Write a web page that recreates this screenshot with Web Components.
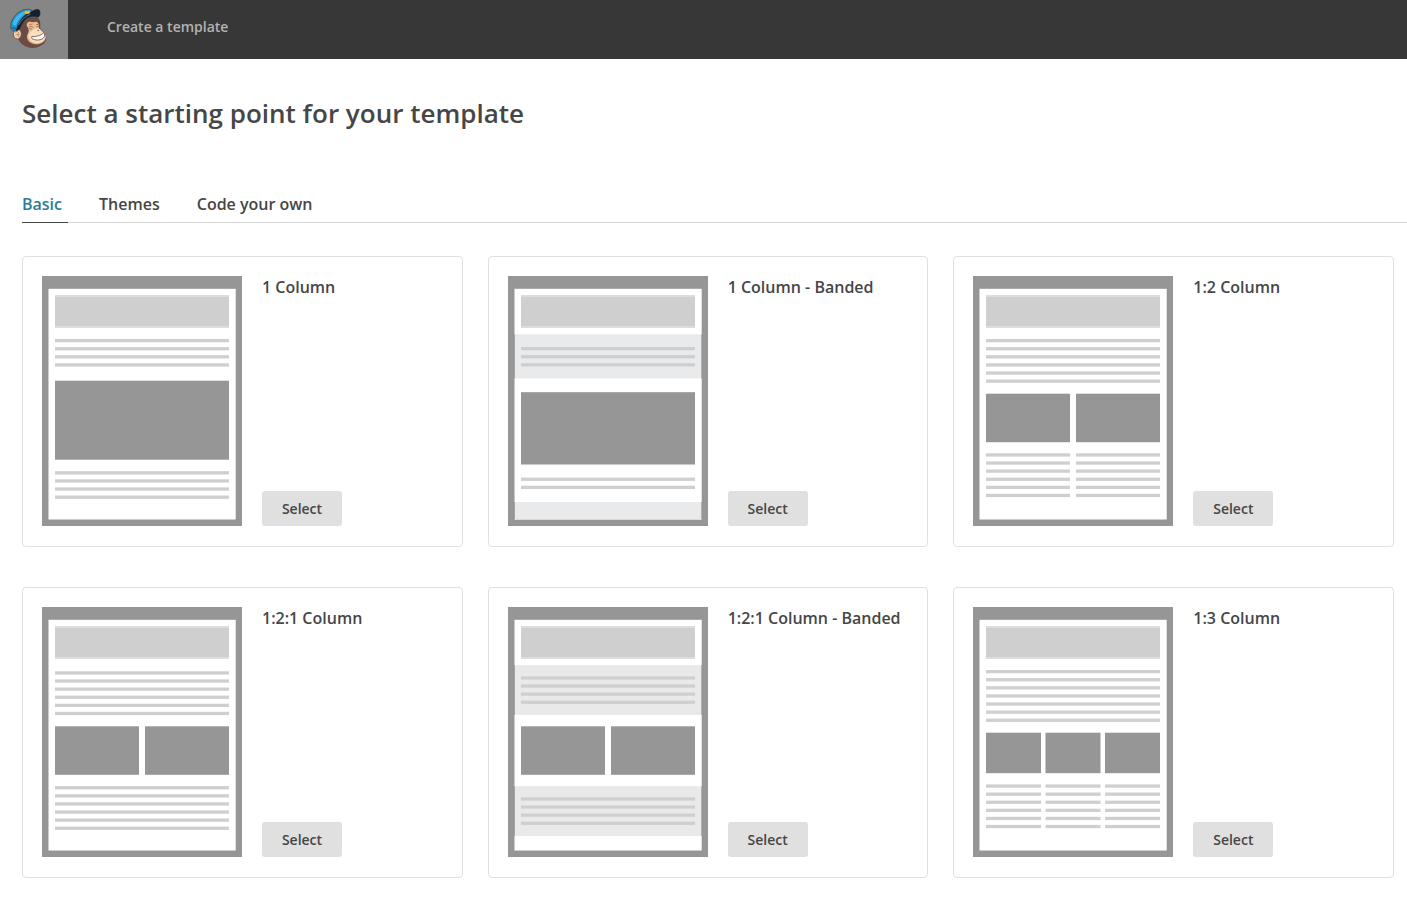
<!DOCTYPE html>
<html lang="en">
<head>
<meta charset="utf-8">
<title>Create a template</title>
<style>
  body { margin: 0; background: #fff; color: #464646; font-family: "Open Sans", "Noto Sans", sans-serif; font-weight: 600; }
</style>
</head>
<body>
<template-page></template-page>

<template id="brand-logo">
  <style>
    :host { display: block; }
    a { display: block; width: 68px; height: 59px; background: #868686; }
    svg { display: block; }
  </style>
  <a href="#" aria-label="Home">
    <svg width="68" height="59" viewBox="-2 0 204 177" aria-hidden="true">
      <path d="M51 112C48 88 58 62 80 50c16-7 32-3 37 11 5 14-2 20 5 29 6 9 15 15 15 24 0 18-21 29-41 30-24 0-40-14-45-32z" fill="#6b4b45"/>
      <path d="M82 67c8-4 14 1 19-1 6-2 10 0 12 5 3 7 0 12 4 17l11 10c6 5 8 10 7 17-3 12-17 19-29 18-16-1-26-10-27-21-1-8 5-13 5-19 1-9-7-13-6-20 1-3 2-5 4-6z" fill="#e8bd93"/>
      <path d="M84 106c2-10 10-14 17-19 9-5 18-1 23 7l7 8c5 8 3 16-3 20-8 7-22 9-32 4-8-4-13-12-12-20z" fill="#f9dfbd"/>
      <path d="M93 110c11 0 27-2 36-12 5 5 3 14-3 18-9 6-23 5-30 1-4-2-5-5-3-7z" fill="#fff" stroke="#694a42" stroke-width="2.5"/>
      <path d="M101 111v8M109 110v9M117 107v11" stroke="#d8d4d0" stroke-width="1"/>
      <path d="M84 82c5-4 9-4 14 1M85 86l9 1M106 81c4-3 7-2 9 1M86 74l9-2M106 73l7 1" fill="none" stroke="#8b5c43" stroke-width="2"/>
      <path d="M110 91l5 1M122 91l2 1" stroke="#6b4b45" stroke-width="2.5"/>
      <ellipse cx="50" cy="102" rx="12" ry="15" fill="#f5d3ad" stroke="#6b4b45" stroke-width="2.5"/>
      <path d="M44 97c7-8 15 5 8 14M45 105l7-2" fill="none" stroke="#a77255" stroke-width="2.5"/>
      <path d="M31 88c-6-24 16-56 45-60 13-2 22 3 19 10C76 44 57 64 47 92c-6 3-12 1-16-4z" fill="#159bd6" stroke="#594643" stroke-width="2.5"/>
      <path d="M36 71c6-20 21-35 41-39 7-1 11 0 13 2-21 6-36 22-44 42-4 1-8-1-10-5z" fill="#42b8e9"/>
      <path d="M34 82c4 4 9 5 13 2" fill="none" stroke="#0876b3" stroke-width="5"/>
      <path d="M46 93c6-29 24-51 49-60 11-6 22-8 23 2 2 9-2 18-9 16-22-6-39 4-49 31-3 7-8 11-14 11z" fill="#102033" stroke="#453a3b" stroke-width="1.5"/>
      <path d="M54 75c8-15 20-27 35-32" fill="none" stroke="#8c9a98" stroke-width="2"/>
      <path d="M71 36l5-5 5 4 5-5 3 7-6 5-7-1-4 2z" fill="#edc742" stroke="#796b43" stroke-width="1"/>
    </svg>
  </a>
</template>

<template id="app-bar">
  <style>
    :host { display: block; background: #373737; color: #b3b3b3; }
    header { display: flex; align-items: flex-start; gap: 39px; }
    p { margin: 0; padding: 16px 0; font-size: 14px; line-height: 21px; }
  </style>
  <header><brand-logo></brand-logo><p><slot></slot></p></header>
</template>

<template id="tab-bar">
  <style>
    :host { display: block; border-bottom: 1px solid #d6d6d6; }
    nav { display: flex; gap: 31px; margin-bottom: -1px; }
    ::slotted(a) { display: block; padding: 0 6px 6px 0; font-size: 16px; line-height: 24px; color: #464646; text-decoration: none; border-bottom: 1px solid transparent; }
    ::slotted(a[aria-current]) { color: #2c7d99; border-bottom-color: #464646; }
  </style>
  <nav aria-label="Template kinds"><slot></slot></nav>
</template>

<template id="layout-preview">
  <style>
    :host { display: block; flex: none; }
    svg { display: block; }
  </style>
  <svg width="200" height="250" viewBox="0 0 200 250" aria-hidden="true"></svg>
</template>

<template id="template-card">
  <style>
    :host { display: flex; gap: 20px; padding: 19px 19px 20px; border: 1px solid #e0e0e0; border-radius: 4px; background: #fff; }
    .info { display: flex; flex-direction: column; justify-content: space-between; align-items: flex-start; flex: 1; min-width: 0; }
    h2 { margin: 0; font-size: 16px; line-height: 22px; font-weight: 600; }
    button { width: 80px; height: 35px; padding: 0; border: 0; border-radius: 3px; background: #e0e0e0; color: #464646; font: inherit; font-size: 14px; line-height: 21px; cursor: pointer; }
  </style>
  <layout-preview></layout-preview>
  <div class="info"><h2 id="name"><slot></slot></h2><button type="button" id="pick" aria-labelledby="pick name">Select</button></div>
</template>

<template id="template-page">
  <style>
    :host { display: block; }
    main { padding: 34px 0 20px 22px; }
    h1 { margin: 0 0 59px; font-size: 26px; line-height: 40px; font-weight: 600; }
    .cards { display: grid; grid-template-columns: repeat(3, 1fr); gap: 40px 25px; margin: 33px 13px 0 0; }
  </style>
  <app-bar>Create a template</app-bar>
  <main>
    <h1>Select a starting point for your template</h1>
    <tab-bar>
      <a href="#basic" aria-current="page">Basic</a>
      <a href="#themes">Themes</a>
      <a href="#code">Code your own</a>
    </tab-bar>
    <section class="cards">
      <template-card layout="one">1 Column</template-card>
      <template-card layout="one-banded">1 Column - Banded</template-card>
      <template-card layout="one-two">1:2 Column</template-card>
      <template-card layout="one-two-one">1:2:1 Column</template-card>
      <template-card layout="one-two-one-banded">1:2:1 Column - Banded</template-card>
      <template-card layout="one-three">1:3 Column</template-card>
    </section>
  </main>
</template>

<script>
  class Base extends HTMLElement {
    constructor() {
      super();
      const source = document.getElementById(this.localName);
      this.attachShadow({ mode: 'open' }).append(source.content.cloneNode(true));
    }
  }

  // Horizontal extents of the columns inside a preview: [x, width].
  const COLUMNS = {
    1: [[13, 174]],
    2: [[13, 84], [103, 84]],
    3: [[13, 55], [72.5, 55], [132, 55]]
  };
  const box = (x, y, w, h, fill) => `<rect x="${x}" y="${y}" width="${w}" height="${h}" fill="${fill}"/>`;
  const band = (y, h, fill = '#e9e9e9') => box(6, y, 188, h, fill) + box(6, y, 1, h, '#a3a3a3') + box(193, y, 1, h, '#b0b0b0');
  const picture = (y, h, columns = 1) => COLUMNS[columns].map(([x, w]) => box(x, y, w, h, '#969696')).join('');
  const lines = (y, count, columns = 1) => Array.from({ length: count }, (_, i) =>
    COLUMNS[columns].map(([x, w]) => box(x, y + i * 8.1, w, 3.3, '#cfcfcf')).join('')).join('');

  const LAYOUTS = {
    'one': () => lines(63, 4) + picture(104.7, 79) + lines(195.2, 4),
    'one-banded': () => band(58.3, 44.2, '#e9eaec') + lines(71, 3) + picture(116.2, 72.3) + lines(201.6, 2) + band(226, 17.5, '#e9eaec'),
    'one-two': () => lines(63, 6) + picture(117.7, 48.5, 2) + lines(177.3, 6, 2),
    'one-two-one': () => lines(64.3, 6) + picture(119.3, 48.5, 2) + lines(179.1, 6),
    'one-two-one-banded': () => band(58.2, 49.8) + lines(69.3, 4) + picture(119.3, 48.5, 2) + band(179.2, 49.8) + lines(190.3, 4),
    'one-three': () => lines(63, 7) + picture(125.7, 40.5, 3) + lines(177.4, 6, 3)
  };

  class LayoutPreview extends Base {
    static observedAttributes = ['layout'];
    attributeChangedCallback(name, old, value) {
      this.shadowRoot.querySelector('svg').innerHTML =
        box(0, 0, 200, 250, '#969696') + box(6.5, 12.8, 187.2, 230.7, '#fff') +
        box(13, 19, 174, 33, '#dddddd') + box(13, 21, 174, 29, '#cfcfcf') +
        (LAYOUTS[value] ? LAYOUTS[value]() : '');
    }
  }

  class TemplateCard extends Base {
    connectedCallback() {
      this.shadowRoot.querySelector('layout-preview').setAttribute('layout', this.getAttribute('layout'));
    }
  }

  customElements.define('brand-logo', class extends Base {});
  customElements.define('app-bar', class extends Base {});
  customElements.define('tab-bar', class extends Base {});
  customElements.define('layout-preview', LayoutPreview);
  customElements.define('template-card', TemplateCard);
  customElements.define('template-page', class extends Base {});
</script>
</body>
</html>
